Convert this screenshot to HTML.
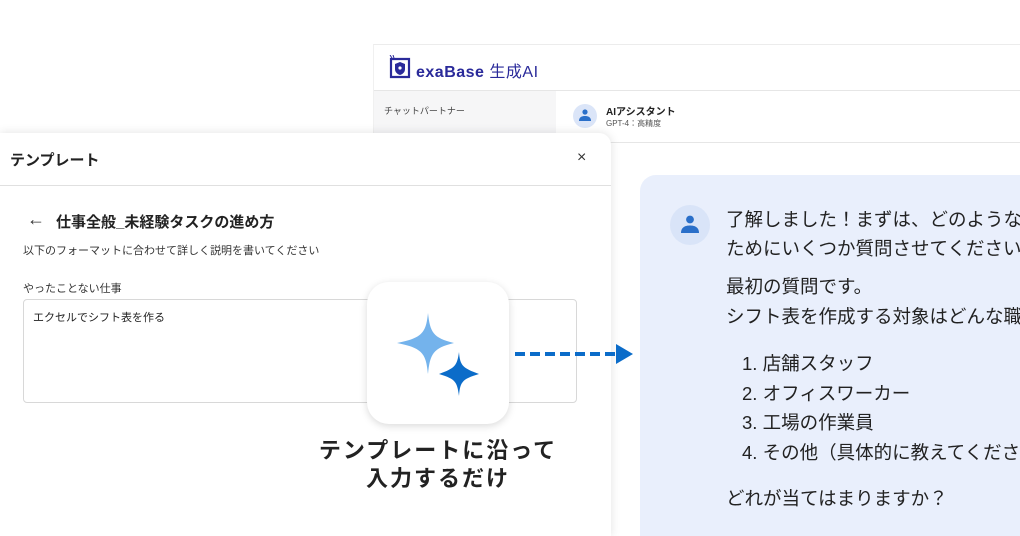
<!DOCTYPE html>
<html style="width:1020px;height:536px;overflow:hidden"><head><meta charset="utf-8"><style>
*{margin:0;padding:0;box-sizing:border-box}
body{width:1020px;height:536px;overflow:hidden;background:#fff;position:relative;font-family:"Liberation Sans","Noto Sans CJK JP",sans-serif;color:#222}
.abs{position:absolute}
</style></head><body>
<div class="abs" style="left:373px;top:44px;width:647px;height:492px;border-top:1px solid #ececec;border-left:1px solid #f0f0f0;background:#fff"></div>
<div class="abs" style="left:374px;top:90px;width:646px;height:1px;background:#e6e6e6"></div>
<div class="abs" style="left:374px;top:91px;width:182px;height:60px;background:#f6f6f7"></div>
<div class="abs" style="left:556px;top:142px;width:464px;height:1px;background:#e6e6e6"></div>
<svg class="abs" style="left:388px;top:55px" width="24" height="26" viewBox="0 0 24 26"><path d="M3 4h18v18H3z" fill="none" stroke="#2a2a9a" stroke-width="2.2"/><path d="M12 7l5 2v5c0 3-2 5-5 6-3-1-5-3-5-6V9z" fill="#2a2a9a"/><circle cx="12" cy="13" r="1.6" fill="#fff"/><path d="M2 0l2 3M5 0l1 3" stroke="#2a2a9a" stroke-width="1"/></svg>
<div class="abs" style="left:416px;top:58px;font-size:16px;font-weight:bold;color:#2a2a9a;letter-spacing:0.5px">exaBase <span style="font-weight:normal">生成AI</span></div>
<div class="abs" style="left:384px;top:104px;font-size:9px;color:#444">チャットパートナー</div>
<div class="abs" style="left:573px;top:104px;width:24px;height:24px;border-radius:50%;background:#dbe5f8"></div>
<svg class="abs" style="left:579px;top:108px" width="12" height="14" viewBox="0 0 12 14"><circle cx="6" cy="4" r="2.6" fill="#2a6fc9"/><path d="M0 13c0-4 3-5 6-5s6 1 6 5z" fill="#2a6fc9"/></svg>
<div class="abs" style="left:606px;top:103px;font-size:10px;font-weight:bold">AIアシスタント</div>
<div class="abs" style="left:606px;top:118px;font-size:8px;color:#555">GPT-4：高精度</div>

<div class="abs" style="left:640px;top:175px;width:380px;height:361px;border-radius:16px 0 0 0;background:#e9effc"></div>
<div class="abs" style="left:670px;top:205px;width:40px;height:40px;border-radius:50%;background:#d9e4f8"></div>
<svg class="abs" style="left:681px;top:213px" width="18" height="22" viewBox="0 0 12 14"><circle cx="6" cy="4" r="2.6" fill="#2a6fc9"/><path d="M0 13c0-4 3-5 6-5s6 1 6 5z" fill="#2a6fc9"/></svg>
<div class="abs" style="left:726px;top:205px;width:294px;overflow:hidden;font-size:18.5px;line-height:29px;color:#222;white-space:nowrap">了解しました！まずは、どのような<br>ためにいくつか質問させてください</div>
<div class="abs" style="left:726px;top:272px;width:294px;overflow:hidden;font-size:18.5px;line-height:30px;color:#222;white-space:nowrap">最初の質問です。<br>シフト表を作成する対象はどんな職</div>
<div class="abs" style="left:742px;top:349px;width:278px;overflow:hidden;font-size:18.5px;line-height:29.5px;color:#222;white-space:nowrap">1. 店舗スタッフ<br>2. オフィスワーカー<br>3. 工場の作業員<br>4. その他（具体的に教えてください</div>
<div class="abs" style="left:726px;top:485px;font-size:18.5px;color:#222;white-space:nowrap">どれが当てはまりますか？</div>

<div class="abs" style="left:0;top:133px;width:611px;height:403px;background:#fff;border-radius:0 12px 0 0;box-shadow:0 0 10px rgba(0,0,0,0.12)"></div>
<div class="abs" style="left:10px;top:149px;font-size:15px;font-weight:bold">テンプレート</div>
<div class="abs" style="left:577px;top:149px;font-size:16px;color:#333">×</div>
<div class="abs" style="left:0;top:185px;width:611px;height:1px;background:#e0e0e0"></div>
<div class="abs" style="left:27px;top:209px;font-size:18px;color:#333">←</div>
<div class="abs" style="left:56px;top:211px;font-size:15px;font-weight:bold">仕事全般_未経験タスクの進め方</div>
<div class="abs" style="left:23px;top:242px;font-size:11px;color:#333">以下のフォーマットに合わせて詳しく説明を書いてください</div>
<div class="abs" style="left:23px;top:280px;font-size:11px;color:#333">やったことない仕事</div>
<div class="abs" style="left:23px;top:299px;width:554px;height:104px;border:1px solid #d8d8d8;border-radius:4px"></div>
<div class="abs" style="left:33px;top:309px;font-size:11px;color:#222">エクセルでシフト表を作る</div>

<div class="abs" style="left:367px;top:282px;width:142px;height:142px;border-radius:22px;background:#fff;box-shadow:0 2px 8px rgba(0,0,0,0.15)"></div>
<svg class="abs" style="left:367px;top:282px" width="142" height="142" viewBox="0 0 142 142">
<path d="M61 31C63 50 66 56 87 61 66 66 63 72 61 92 59 72 56 66 30 61 56 56 59 50 61 31Z" fill="#74b3ec"/>
<path d="M92 70C93 84 96 86 112 92 96 97 93 99 92 114 90 99 88 97 72 92 88 86 90 84 92 70Z" fill="#0b6cc9"/>
</svg>
<svg class="abs" style="left:512px;top:343px" width="122" height="22" viewBox="0 0 122 22"><line x1="3" y1="11" x2="104" y2="11" stroke="#0b6cc9" stroke-width="4" stroke-dasharray="10 5"/><path d="M104 1L121 11 104 21Z" fill="#0b6cc9"/></svg>
<div class="abs" style="left:300px;top:437px;width:276px;text-align:center;font-size:22px;font-weight:bold;line-height:28px;letter-spacing:2px;color:#222">テンプレートに沿って<br>入力するだけ</div>
</body></html>
